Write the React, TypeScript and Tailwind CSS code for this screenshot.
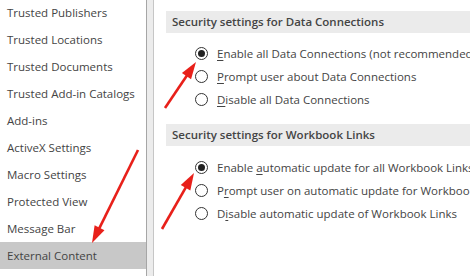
import React from "react";

const items = [
  "Trusted Publishers",
  "Trusted Locations",
  "Trusted Documents",
  "Trusted Add-in Catalogs",
  "Add-ins",
  "ActiveX Settings",
  "Macro Settings",
  "Protected View",
  "Message Bar",
  "External Content",
];

function Radio({ checked }: { checked?: boolean }) {
  return (
    <span className="flex h-[13px] w-[13px] shrink-0 items-center justify-center rounded-full border border-[#333] bg-white">
      {checked && <span className="h-[7px] w-[7px] rounded-full bg-[#222]" />}
    </span>
  );
}

function Opt({ checked, pre, u, post }: { checked?: boolean; pre: string; u: string; post: string }) {
  return (
    <div className="flex h-[23px] items-center gap-[9px]">
      <Radio checked={checked} />
      <span className="whitespace-nowrap">
        {pre}
        <span className="underline underline-offset-2">{u}</span>
        {post}
      </span>
    </div>
  );
}

function Arrow({ x1, y1, x2, y2 }: { x1: number; y1: number; x2: number; y2: number }) {
  const dx = x2 - x1;
  const dy = y2 - y1;
  const len = Math.hypot(dx, dy);
  const ux = dx / len;
  const uy = dy / len;
  const hl = 17;
  const hw = 5.5;
  const bx = x2 - ux * hl;
  const by = y2 - uy * hl;
  const px = -uy * hw;
  const py = ux * hw;
  const pts = `${x2},${y2} ${bx + px},${by + py} ${bx - px},${by - py}`;
  return (
    <g>
      <line x1={x1} y1={y1} x2={bx + ux * 2} y2={by + uy * 2} stroke="#e8201a" strokeWidth="2.6" />
      <polygon points={pts} fill="#e8201a" />
    </g>
  );
}

export default function App() {
  return (
    <div
      className="relative flex h-[276px] w-[470px] overflow-hidden bg-white text-[11.5px] text-[#444]"
      style={{ fontFamily: '"Open Sans", "Noto Sans", sans-serif' }}
    >
      <div className="-mt-[1px] flex w-[146px] shrink-0 flex-col overflow-hidden">
        {items.map((t) => (
          <div
            key={t}
            className={`flex h-[27px] shrink-0 items-center whitespace-nowrap pl-[7px] ${
              t === "External Content" ? "bg-[#c8c8c8]" : ""
            }`}
          >
            {t}
          </div>
        ))}
      </div>
      <div className="w-[1px] shrink-0 bg-[#a6a6a6]" />
      <div className="w-[6px] shrink-0 bg-[#ececec]" />
      <div className="w-[1px] shrink-0 bg-[#c6c6c6]" />
      <div className="flex min-w-0 flex-1 flex-col pl-[12px] pt-[11px]">
        <div className="flex h-[22px] items-center whitespace-nowrap bg-[#ebebeb] pl-[6px] font-semibold text-[#444]">
          Security settings for Data Connections
        </div>
        <div className="mt-[9px] flex flex-col pl-[29px]">
          <Opt checked pre="" u="E" post="nable all Data Connections (not recommended)" />
          <Opt pre="" u="P" post="rompt user about Data Connections" />
          <Opt pre="" u="D" post="isable all Data Connections" />
        </div>
        <div className="mt-[13px] flex h-[22px] items-center whitespace-nowrap bg-[#ebebeb] pl-[6px] font-semibold text-[#444]">
          Security settings for Workbook Links
        </div>
        <div className="mt-[10px] flex flex-col pl-[29px]">
          <Opt checked pre="Enable " u="a" post="utomatic update for all Workbook Links" />
          <Opt pre="P" u="r" post="ompt user on automatic update for Workbook Links" />
          <Opt pre="D" u="i" post="sable automatic update of Workbook Links" />
        </div>
      </div>
      <svg className="pointer-events-none absolute inset-0" width="470" height="276">
        <Arrow x1={165} y1={108} x2={196} y2={62} />
        <Arrow x1={162} y1={229} x2={194} y2={173} />
        <Arrow x1={138} y1={150} x2={92} y2={243} />
      </svg>
    </div>
  );
}
